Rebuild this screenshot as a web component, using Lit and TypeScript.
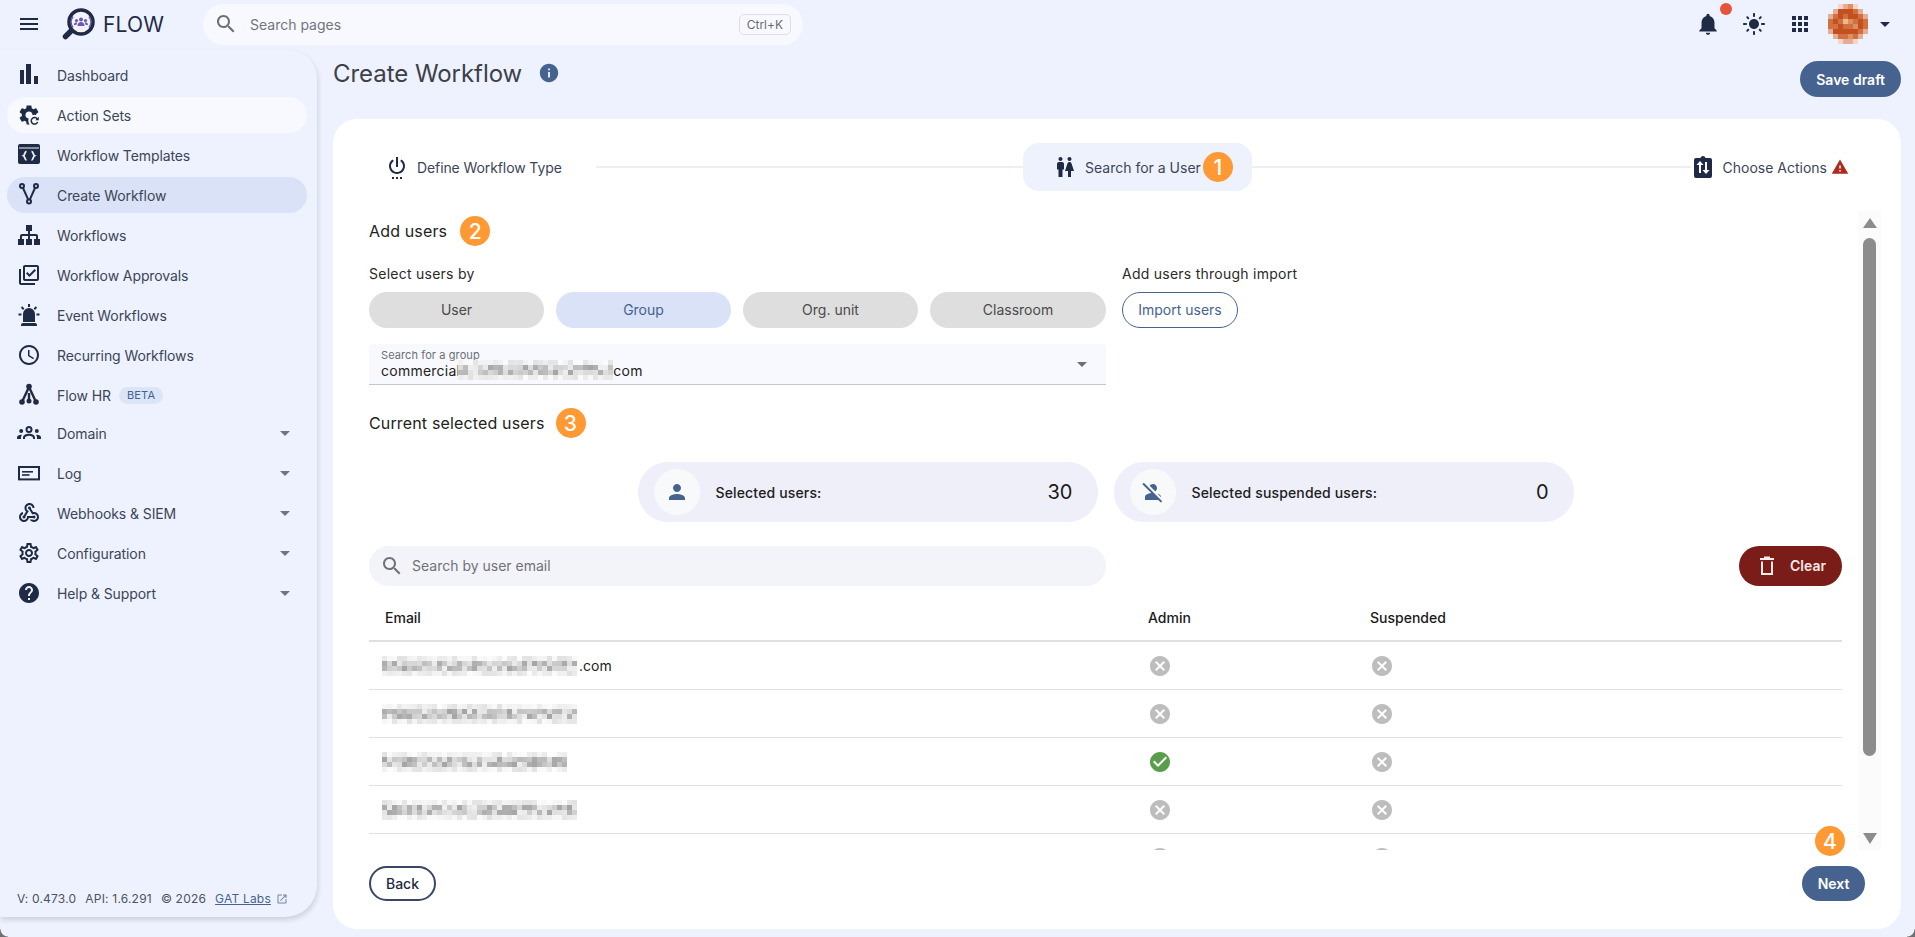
import { LitElement, html, css, svg } from "lit";
import { customElement } from "lit/decorators.js";

const P = {
  menu: "M3 18h18v-2H3v2zm0-5h18v-2H3v2zm0-7v2h18V6H3z",
  search: "M15.5 14h-.79l-.28-.27C15.41 12.59 16 11.11 16 9.5 16 5.91 13.09 3 9.5 3S3 5.91 3 9.5 5.91 16 9.5 16c1.61 0 3.09-.59 4.23-1.57l.27.28v.79l5 4.99L20.49 19l-4.99-5zm-6 0C7.01 14 5 11.99 5 9.5S7.01 5 9.5 5 14 7.01 14 9.5 11.99 14 9.5 14z",
  bell: "M12 22c1.1 0 2-.9 2-2h-4c0 1.1.89 2 2 2zm6-6v-5c0-3.07-1.64-5.64-4.5-6.32V4c0-.83-.67-1.5-1.5-1.5s-1.5.67-1.5 1.5v.68C7.63 5.36 6 7.92 6 11v5l-2 2v1h16v-1l-2-2z",
  sun: "M12 7c-2.76 0-5 2.24-5 5s2.24 5 5 5 5-2.24 5-5-2.24-5-5-5zM2 13h2c.55 0 1-.45 1-1s-.45-1-1-1H2c-.55 0-1 .45-1 1s.45 1 1 1zm18 0h2c.55 0 1-.45 1-1s-.45-1-1-1h-2c-.55 0-1 .45-1 1s.45 1 1 1zM11 2v2c0 .55.45 1 1 1s1-.45 1-1V2c0-.55-.45-1-1-1s-1 .45-1 1zm0 18v2c0 .55.45 1 1 1s1-.45 1-1v-2c0-.55-.45-1-1-1s-1 .45-1 1zM5.99 4.58c-.39-.39-1.03-.39-1.41 0-.39.39-.39 1.03 0 1.41l1.06 1.06c.39.39 1.03.39 1.41 0s.39-1.03 0-1.41L5.99 4.58zm12.37 12.37c-.39-.39-1.03-.39-1.41 0-.39.39-.39 1.03 0 1.41l1.06 1.06c.39.39 1.03.39 1.41 0 .39-.39.39-1.03 0-1.41l-1.06-1.06zm1.06-10.96c.39-.39.39-1.03 0-1.41-.39-.39-1.03-.39-1.41 0l-1.06 1.06c-.39.39-.39 1.03 0 1.41s1.03.39 1.41 0l1.06-1.06zM7.05 18.36c.39-.39.39-1.03 0-1.41-.39-.39-1.03-.39-1.41 0l-1.06 1.06c-.39.39-.39 1.03 0 1.41s1.03.39 1.41 0l1.06-1.06z",
  apps: "M4 8h4V4H4v4zm6 12h4v-4h-4v4zm-6 0h4v-4H4v4zm0-6h4v-4H4v4zm6 0h4v-4h-4v4zm6-10v4h4V4h-4zm-6 4h4V4h-4v4zm6 6h4v-4h-4v4zm0 6h4v-4h-4v4z",
  drop: "M7 10l5 5 5-5z",
  info: "M12 2C6.48 2 2 6.48 2 12s4.48 10 10 10 10-4.48 10-10S17.52 2 12 2zm1 15h-2v-6h2v6zm0-8h-2V7h2v2z",
  power: "M7 24h2v-2H7v2zm4 0h2v-2h-2v2zm2-22h-2v10h2V2zm3.56 2.44l-1.45 1.45C16.84 6.94 18 8.83 18 11c0 3.31-2.69 6-6 6s-6-2.69-6-6c0-2.17 1.16-4.06 2.88-5.12L7.44 4.44C5.36 5.88 4 8.28 4 11c0 4.42 3.58 8 8 8s8-3.58 8-8c0-2.72-1.36-5.12-3.44-6.56zM15 24h2v-2h-2v2z",
  wc: "M5.5 22v-7.5H4V9c0-1.1.9-2 2-2h3c1.1 0 2 .9 2 2v5.5H9.5V22h-4zM18 22v-6h3l-2.54-7.63C18.18 7.55 17.42 7 16.56 7h-.12c-.86 0-1.63.55-1.9 1.37L12 16h3v6h3zM7.5 6c1.11 0 2-.89 2-2s-.89-2-2-2-2 .89-2 2 .89 2 2 2zm9 0c1.11 0 2-.89 2-2s-.89-2-2-2-2 .89-2 2 .89 2 2 2z",
  warn: "M1 21h22L12 2 1 21zm12-3h-2v-2h2v2zm0-4h-2v-4h2v4z",
  person: "M12 12c2.21 0 4-1.79 4-4s-1.79-4-4-4-4 1.79-4 4 1.79 4 4 4zm0 2c-2.67 0-8 1.34-8 4v2h16v-2c0-2.66-5.33-4-8-4z",
  personOff: "M8.65 5.82C9.36 4.72 10.6 4 12 4c2.21 0 4 1.79 4 4 0 1.4-.72 2.64-1.82 3.35L8.65 5.82zM20 17.17c-.02-1.1-.63-2.11-1.61-2.62-.54-.28-1.13-.54-1.77-.76L20 17.17zm1.19 4.02L2.81 2.81 1.39 4.22l8.89 8.89c-1.81.23-3.39.79-4.67 1.45C4.61 15.07 4 16.1 4 17.22V20h13.17l2.61 2.61 1.41-1.42z",
  trash: "M5 4h14v2H5zM9 2.500h6V4H9zM6 7.500V21h12V7.500h-2V19H8V7.500z",
  cancel: "M12 2C6.47 2 2 6.47 2 12s4.47 10 10 10 10-4.47 10-10S17.53 2 12 2zm5 13.59L15.59 17 12 13.41 8.41 17 7 15.59 10.59 12 7 8.41 8.41 7 12 10.59 15.59 7 17 8.41 13.41 12 17 15.59z",
  check: "M12 2C6.48 2 2 6.48 2 12s4.48 10 10 10 10-4.48 10-10S17.52 2 12 2zm-2 15l-5-5 1.41-1.41L10 14.17l7.59-7.59L19 8l-9 9z",
  open: "M19 19H5V5h7V3H5c-1.11 0-2 .9-2 2v14c0 1.1.89 2 2 2h14c1.1 0 2-.9 2-2v-7h-2v7zM14 3v2h3.59l-9.83 9.83 1.41 1.41L19 6.41V10h2V3h-7z",
  gear: "M19.14 12.94c.04-.3.06-.61.06-.94 0-.32-.02-.64-.07-.94l2.03-1.58c.18-.14.23-.41.12-.61l-1.92-3.32c-.12-.22-.37-.29-.59-.22l-2.39.96c-.5-.38-1.03-.7-1.62-.94l-.36-2.54c-.04-.24-.24-.41-.48-.41h-3.84c-.24 0-.43.17-.47.41l-.36 2.54c-.59.24-1.13.57-1.62.94l-2.39-.96c-.22-.08-.47 0-.59.22L2.74 8.87c-.12.21-.08.47.12.61l2.03 1.58c-.05.3-.09.63-.09.94s.02.64.07.94l-2.03 1.58c-.18.14-.23.41-.12.61l1.92 3.32c.12.22.37.29.59.22l2.39-.96c.5.38 1.03.7 1.62.94l.36 2.54c.05.24.24.41.48.41h3.84c.24 0 .44-.17.47-.41l.36-2.54c.59-.24 1.13-.56 1.62-.94l2.39.96c.22.08.47 0 .59-.22l1.92-3.32c.12-.22.07-.47-.12-.61l-2.01-1.58zM12 15.6c-1.98 0-3.6-1.62-3.6-3.6s1.62-3.6 3.6-3.6 3.6 1.62 3.6 3.6-1.62 3.6-3.6 3.6z",
  sitemap: "M9 2v6h2v3H5c-1.1 0-2 .9-2 2v3H1v6h6v-6H5v-3h6v3H9v6h6v-6h-2v-3h6v3h-2v6h6v-6h-2v-3c0-1.1-.9-2-2-2h-6V8h2V2H9z",
  approvals: "M20 4v12H8V4h12m0-2H8c-1.1 0-2 .9-2 2v12c0 1.1.9 2 2 2h12c1.1 0 2-.9 2-2V4c0-1.1-.9-2-2-2zm-7.53 12L9 10.5l1.4-1.41 2.07 2.08L17.6 6 19 7.41 12.47 14zM4 6H2v14c0 1.1.9 2 2 2h14v-2H4V6z",
  alarm: "M6 6.9L3.87 4.78l1.41-1.41L7.4 5.5 6 6.9M13 1v3h-2V1h2m7.13 3.78L18 6.9l-1.4-1.4 2.12-2.13 1.41 1.41M4.5 10.5v2h-3v-2h3m15 0h3v2h-3v-2M6 20h12a2 2 0 0 1 2 2v1H4v-1a2 2 0 0 1 2-2m6-15a6 6 0 0 1 6 6v8H6v-8a6 6 0 0 1 6-6Z",
  clock: "M11.99 2C6.47 2 2 6.48 2 12s4.47 10 9.99 10C17.52 22 22 17.52 22 12S17.52 2 11.99 2zM12 20c-4.42 0-8-3.58-8-8s3.58-8 8-8 8 3.58 8 8-3.58 8-8 8zm.5-13H11v6l5.25 3.15.75-1.23-4.5-2.67z",
  webhook: "M10 15h5.88c.27-.31.67-.5 1.12-.5.83 0 1.5.67 1.5 1.5s-.67 1.5-1.5 1.5c-.44 0-.84-.19-1.12-.5H11.9c-.46 2.28-2.48 4-4.9 4-2.76 0-5-2.24-5-5 0-2.42 1.72-4.44 4-4.9v2.07c-1.16.41-2 1.53-2 2.83 0 1.65 1.35 3 3 3s3-1.35 3-3v-1zm2.5-11c1.65 0 3 1.35 3 3h2c0-2.76-2.24-5-5-5s-5 2.24-5 5c0 1.43.6 2.71 1.55 3.62l-2.35 3.9c-.68.14-1.2.75-1.2 1.48 0 .83.67 1.5 1.5 1.5s1.5-.67 1.5-1.5c0-.16-.02-.31-.07-.45l3.38-5.63C10.49 9.61 9.5 8.42 9.5 7c0-1.65 1.35-3 3-3zm4.5 9c-.64 0-1.23.2-1.72.54l-3.05-5.07C11.53 8.35 11 7.74 11 7c0-.83.67-1.5 1.5-1.5s1.5.67 1.5 1.5c0 .15-.02.29-.06.43l2.19 3.65c.28-.05.57-.08.87-.08 2.76 0 5 2.24 5 5s-2.24 5-5 5c-1.85 0-3.47-1.01-4.33-2.5h2.67c.48.32 1.05.5 1.66.5 1.65 0 3-1.35 3-3s-1.35-3-3-3z",
  settings: "M19.43 12.98c.04-.32.07-.64.07-.98 0-.34-.03-.66-.07-.98l2.11-1.65c.19-.15.24-.42.12-.64l-2-3.46c-.09-.16-.26-.25-.44-.25-.06 0-.12.01-.17.03l-2.49 1c-.52-.4-1.08-.73-1.69-.98l-.38-2.65C14.46 2.18 14.25 2 14 2h-4c-.25 0-.46.18-.49.42l-.38 2.65c-.61.25-1.17.59-1.69.98l-2.49-1c-.06-.02-.12-.03-.18-.03-.17 0-.34.09-.43.25l-2 3.46c-.13.22-.07.49.12.64l2.11 1.65c-.04.32-.07.65-.07.98 0 .33.03.66.07.98l-2.11 1.65c-.19.15-.24.42-.12.64l2 3.46c.09.16.26.25.44.25.06 0 .12-.01.17-.03l2.49-1c.52.4 1.08.73 1.69.98l.38 2.65c.03.24.24.42.49.42h4c.25 0 .46-.18.49-.42l.38-2.65c.61-.25 1.17-.59 1.69-.98l2.49 1c.06.02.12.03.18.03.17 0 .34-.09.43-.25l2-3.46c.12-.22.07-.49-.12-.64l-2.11-1.65zm-1.98-1.71c.04.31.05.52.05.73 0 .21-.02.43-.05.73l-.14 1.13.89.7 1.08.84-.7 1.21-1.27-.51-1.04-.42-.9.68c-.43.32-.84.56-1.25.73l-1.06.43-.16 1.13-.2 1.35h-1.4l-.19-1.35-.16-1.13-1.06-.43c-.43-.18-.83-.41-1.23-.71l-.91-.7-1.06.43-1.27.51-.7-1.21 1.08-.84.89-.7-.14-1.13c-.03-.31-.05-.54-.05-.74s.02-.43.05-.73l.14-1.13-.89-.7-1.08-.84.7-1.21 1.27.51 1.04.42.9-.68c.43-.32.84-.56 1.25-.73l1.06-.43.16-1.13.2-1.35h1.39l.19 1.35.16 1.13 1.06.43c.43.18.83.41 1.23.71l.91.7 1.06-.43 1.27-.51.7 1.21-1.07.85-.89.7.14 1.13zM12 8c-2.21 0-4 1.79-4 4s1.79 4 4 4 4-1.79 4-4-1.79-4-4-4zm0 6c-1.1 0-2-.9-2-2s.9-2 2-2 2 .9 2 2-.9 2-2 2z",
  help: "M12 2C6.48 2 2 6.48 2 12s4.48 10 10 10 10-4.48 10-10S17.52 2 12 2zm1 17h-2v-2h2v2zm2.07-7.75l-.9.92C13.45 12.9 13 13.5 13 15h-2v-.5c0-1.1.45-2.1 1.17-2.83l1.24-1.26c.37-.36.59-.86.59-1.41 0-1.1-.9-2-2-2s-2 .9-2 2H8c0-2.21 1.79-4 4-4s4 1.79 4 4c0 .88-.36 1.68-.93 2.25z",
};

const ic = (d: string, size = 24) =>
  html`<svg class="ic" viewBox="0 0 24 24" width=${size} height=${size}><path d=${d}></path></svg>`;

const custom = (body: unknown) =>
  html`<svg class="ic" viewBox="0 0 24 24" width="24" height="24">${body}</svg>`;

const navIcons: Record<string, unknown> = {
  bars: custom(svg`<rect x="3" y="7" width="4" height="14"/><rect x="9" y="1" width="5" height="20"/><rect x="17" y="13" width="4" height="8"/>`),
  cogsync: custom(svg`<path d=${P.gear}/><circle cx="17.500" cy="18" r="6.200" fill="#f8f9ff"/><path d="M20.300 16a3.300 3.300 0 1 0 .3 3" fill="none" stroke="currentColor" stroke-width="1.500"/><path d="M21.800 13.800v3.400h-3.400z"/>`),
  tmpl: custom(svg`<rect x="1" y="1" width="22" height="20" rx="2"/><rect x="2" y="4.500" width="20" height="1" fill="#eef2fe"/><path d="M9.500 8.500c-2 0-1.400 3.500-3 4.200 1.600.7 1 4.300 3 4.300M14.500 8.500c2 0 1.400 3.500 3 4.200-1.600.7-1 4.300-3 4.300" fill="none" stroke="#eef2fe" stroke-width="1.800"/>`),
  fork: custom(svg`<g fill="none" stroke="currentColor" stroke-width="2" transform="translate(0 -1.500)"><circle cx="5" cy="4.500" r="2"/><circle cx="19" cy="4.500" r="2"/><circle cx="12" cy="20" r="2"/><path d="M6 6.500l5.200 11.700M18 6.500l-5.200 11.700"/></g>`),
  sitemap: ic(P.sitemap),
  approvals: ic(P.approvals),
  alarm: ic(P.alarm),
  clock: ic(P.clock),
  hr: custom(svg`<circle cx="12" cy="3.500" r="2.800"/><circle cx="5" cy="19" r="2.800"/><circle cx="12" cy="18" r="2.500"/><circle cx="19" cy="19" r="2.800"/><path d="M12 4L5 19M12 4L19 19M12 10v8" fill="none" stroke="currentColor" stroke-width="2.400"/>`),
  groups: custom(svg`<circle cx="12" cy="8.500" r="2.500" fill="none" stroke="currentColor" stroke-width="2"/><path d="M6 18v-1.500c0-2.500 3-3.800 6-3.800s6 1.300 6 3.800V18h-2v-1.300c0-1-1.800-2-4-2s-4 1-4 2V18z"/><circle cx="4.200" cy="10" r="2"/><circle cx="19.800" cy="10" r="2"/><path d="M0 18v-1.500c0-1.800 2-2.800 4-2.800.4 0 .7 0 1 .1-.6.7-1 1.600-1 2.700V18zM24 18v-1.500c0-1.800-2-2.800-4-2.800-.4 0-.7 0-1 .1.600.7 1 1.600 1 2.700V18z"/>`),
  log: custom(svg`<rect x="2" y="6" width="20" height="12.400" fill="none" stroke="currentColor" stroke-width="2"/><rect x="5" y="10" width="11" height="1.600"/><rect x="5" y="13.200" width="7.500" height="1.600"/>`),
  webhook: ic(P.webhook),
  settings: ic(P.settings),
  help: ic(P.help),
};

type NavItem = { label: string; icon: string; cls?: string; beta?: boolean; more?: boolean };

const NAV: NavItem[] = [
  { label: "Dashboard", icon: "bars" },
  { label: "Action Sets", icon: "cogsync", cls: "hover" },
  { label: "Workflow Templates", icon: "tmpl" },
  { label: "Create Workflow", icon: "fork", cls: "active" },
  { label: "Workflows", icon: "sitemap" },
  { label: "Workflow Approvals", icon: "approvals" },
  { label: "Event Workflows", icon: "alarm" },
  { label: "Recurring Workflows", icon: "clock" },
  { label: "Flow HR", icon: "hr", beta: true, cls: "tight" },
  { label: "Domain", icon: "groups", more: true },
  { label: "Log", icon: "log", more: true },
  { label: "Webhooks & SIEM", icon: "webhook", more: true },
  { label: "Configuration", icon: "settings", more: true },
  { label: "Help & Support", icon: "help", more: true },
];

function pixels(cols: number, seed: number, rows = 4, cell = 5) {
  let s = seed;
  const next = () => {
    s = (s * 16807) % 2147483647;
    return (s % 1000) / 1000;
  };
  const rects: unknown[] = [];
  for (let r = 0; r < rows; r++) {
    for (let c = 0; c < cols; c++) {
      const mid = r === 1 || r === 2;
      const v = mid ? 165 + Math.floor(next() * 75) : 225 + Math.floor(next() * 28);
      rects.push(svg`<rect x=${c * cell} y=${r * cell} width=${cell} height=${cell} fill=${`rgb(${v},${v},${v})`}/>`);
    }
  }
  return html`<svg class="px" width=${cols * cell} height=${rows * cell} viewBox="0 0 ${cols * cell} ${rows * cell}">${rects}</svg>`;
}

const AV = [
  "..plkp..",
  ".ldddml.",
  "lmdmddml",
  "mdmskmdm",
  "mmdmmkdm",
  "ldddddml",
  ".lmmkml.",
  "..pllp..",
];
const AVC: Record<string, string> = { d: "#c44f1f", m: "#d0713f", k: "#dc8f63", l: "#e5ad95", p: "#f2d6cb", s: "#ecb98c" };

function avatar() {
  const cell = 40 / 8;
  const rects: unknown[] = [];
  AV.forEach((row, y) =>
    [...row].forEach((ch, x) => {
      if (ch !== ".") rects.push(svg`<rect x=${x * cell} y=${y * cell} width=${cell} height=${cell} fill=${AVC[ch]}/>`);
    })
  );
  return html`<svg class="avatar" width="40" height="40" viewBox="0 0 40 40" shape-rendering="crispEdges">${rects}</svg>`;
}

const badge = (n: number) => html`<span class="badge">${n}</span>`;

const ROWS = [
  { cols: 39, seed: 71, admin: false, com: true },
  { cols: 39, seed: 913, admin: false },
  { cols: 37, seed: 2207, admin: true },
  { cols: 39, seed: 4409, admin: false },
  { cols: 0, seed: 1, admin: false },
];

@customElement("app-root")
export class AppRoot extends LitElement {
  static styles = css`
    :host {
      display: block;
      width: 100%;
      height: 100vh;
      overflow: hidden;
      position: relative;
      background: #eef2fe;
      color: #3b4559;
      font-family: Inter, "Noto Sans", sans-serif;
      font-size: 14px;
    }
    * { box-sizing: border-box; }
    .ic { fill: currentColor; display: block; flex: none; }
    .px { display: block; flex: none; }

    .top { height: 50px; display: flex; align-items: center; padding: 0 25px 2px 17px; color: #1f2a44; }
    .logo { margin-left: 20px; flex: none; display: block; }
    .brand { margin-left: 8px; width: 100px; font-size: 21px; color: #1f2a44; letter-spacing: .2px; }
    .search {
      width: 600px; height: 41px; border-radius: 21px; background: #f8f9ff;
      display: flex; align-items: center; padding: 0 12px 0 11px; gap: 12px; color: #6b6f76;
    }
    .search span { flex: 1; color: #70757e; }
    .search kbd {
      font: 12px Inter, sans-serif; color: #666c76; border: 1px solid #dcdfe6; border-radius: 5px; padding: 2px 7px;
    }
    .tools { margin-left: auto; display: flex; align-items: center; }
    .bell { position: relative; }
    .dot { position: absolute; top: -8px; right: -11px; width: 12px; height: 12px; border-radius: 50%; background: #e5533d; }
    .sun { margin-left: 21px; }
    .apps { margin-left: 22px; }
    .avatar { margin-left: 16px; display: block; flex: none; }
    .caret { margin-left: 5px; margin-right: -7px; }

    .layout { display: flex; height: 887px; }
    .side {
      width: 317px; height: 867px; flex: none; display: flex; flex-direction: column;
      padding: 5px 10px 0 7px; border-radius: 0 28px 32px 0; background: #eef2fe;
      box-shadow: 1px 3px 5px rgba(30, 40, 70, .16);
    }
    .item { height: 36px; margin: 2px 0; display: flex; align-items: center; padding: 0 10px; gap: 16px; border-radius: 18px; flex: none; color: #3b4559; letter-spacing: -.1px; }
    .item > .ic { color: #1f2a44; }
    .item.hover { background: #f8f9ff; }
    .item.active { background: #d9e2f6; }
    .item.tight { margin-bottom: 0; }
    .item .arrow { margin-left: auto; color: #70747f; }
    .beta { margin-left: -8px; background: #dce5f8; color: #46638f; font-size: 11px; padding: 0 8px; line-height: 17px; border-radius: 9px; letter-spacing: .2px; }
    .foot { margin-top: auto; padding: 0 0 11px 10px; font-size: 12px; color: #4a5262; display: flex; align-items: center; letter-spacing: .2px; white-space: nowrap; }
    .foot span { margin-right: 9px; }
    .foot a { color: #46638f; text-decoration: underline; margin-right: 5px; }
    .foot .ic { color: #6f86a8; }

    .main { flex: 1; min-width: 0; padding: 0 14px 8px 16px; display: flex; flex-direction: column; }
    .head { height: 69px; flex: none; display: flex; align-items: flex-start; justify-content: space-between; }
    .title { height: 46px; display: flex; align-items: center; gap: 16px; font-size: 24px; color: #3c4048; letter-spacing: -.05px; }
    .title .ic { color: #46638f; }
    .save { margin-top: 11px; }
    .btn { border: 0; height: 36px; border-radius: 18px; background: #46638f; color: #fff; font: 600 14px Inter, sans-serif; padding: 0 16px; display: flex; align-items: center; }

    .card { flex: 1; min-height: 0; background: #fff; border-radius: 24px; padding-top: 24px; display: flex; flex-direction: column; position: relative; }
    .stepper { height: 48px; flex: none; margin: 0 36px; display: flex; align-items: center; color: #1f2a44; }
    .step { display: flex; align-items: center; gap: 8px; height: 48px; color: #3b4559; flex: none; white-space: nowrap; }
    .step > .ic { color: #1f2a44; }
    .step.a { padding: 0 16px; letter-spacing: -.1px; width: 209px; }
    .step.b { background: #eef2fd; border-radius: 16px; width: 229px; padding: 0 20px 0 30px; }
    .step.b .badge { margin-left: -6px; }
    .step.c { padding-right: 16px; }
    .step.c .warn { color: #ad2a20; margin-left: -4px; }
    .line { height: 2px; background: #efefef; margin-top: -1px; }
    .line.l1 { width: 427px; margin-left: 18px; }
    .line.l2 { flex: 1; }

    .badge { width: 30px; height: 30px; border-radius: 50%; flex: none; background: #ff9933; color: #fff; font-size: 21px; font-weight: 500; display: flex; align-items: center; justify-content: center; }

    .body { margin-top: 20px; height: 639px; flex: none; display: flex; gap: 16px; padding: 0 20px 0 36px; }
    .scroll { flex: 1; min-width: 0; overflow: hidden; padding-top: 5px; color: #1a1a1a; }
    .h { display: flex; align-items: center; gap: 13px; height: 30px; font-size: 16px; color: #222; letter-spacing: .15px; }
    .sel { display: flex; margin-top: 18px; }
    .sel .g { width: 753px; }
    .lbl { height: 20px; line-height: 20px; color: #2a2a2a; letter-spacing: .25px; }
    .pills { display: flex; gap: 12px; margin-top: 8px; }
    .pill { width: 175px; height: 36px; border-radius: 18px; background: #dedede; color: #4a4a4a; display: flex; align-items: center; justify-content: center; padding-bottom: 1px; }
    .pill:last-child { width: 176px; }
    .pill.on { background: #d9e2f6; color: #46638f; }
    .import { width: 116px; margin-top: 8px; height: 36px; border-radius: 18px; border: 1px solid #46638f; color: #46638f; display: flex; align-items: center; justify-content: center; padding-bottom: 1px; }
    .field { width: 737px; height: 41px; margin-top: 16px; background: #f8f9fe; border-bottom: 1px solid #c4c7d0; border-radius: 4px 4px 0 0; padding: 5px 12px 0; position: relative; }
    .field small { display: block; font-size: 11px; line-height: 13px; color: #6a6e75; letter-spacing: .1px; }
    .field .val { display: flex; align-items: center; line-height: 17px; color: #222; margin-top: -2px; height: 20px; letter-spacing: .25px; }
    .field .val .px { margin-left: -2px; }
    .field .arrow { position: absolute; right: 12px; top: 8px; color: #6b6f76; }
    .cur { margin-top: 23px; gap: 11px; }
    .stats { display: flex; justify-content: center; gap: 16px; margin-top: 24px; }
    .stat { width: 460px; height: 60px; border-radius: 30px; background: #eeeff9; display: flex; align-items: center; padding: 0 25px 0 16px; gap: 16px; }
    .stat i { width: 46px; height: 46px; border-radius: 50%; background: #f8f9fa; color: #46638f; display: flex; align-items: center; justify-content: center; }
    .stat b { font-weight: 500; flex: 1; color: #202020; letter-spacing: .15px; }
    .stat em { font-style: normal; font-size: 20px; color: #1a1a1a; }
    .tools2 { display: flex; justify-content: space-between; margin-top: 24px; }
    .find { width: 737px; height: 40px; border-radius: 20px; background: #f3f4fa; display: flex; align-items: center; padding: 0 0 1px 11px; gap: 8px; color: #6f7278; }
    .clear { background: #7a1c18; border: 0; width: 103px; height: 40px; border-radius: 20px; color: #f6e9e8; font: 600 14px Inter, sans-serif; display: flex; align-items: center; padding: 0 0 1px 16px; gap: 11px; }
    .thead, .row { display: grid; grid-template-columns: 779px 222px 1fr; align-items: center; }
    .thead { height: 46px; margin-top: 10px; border-bottom: 2px solid #e0e0e0; font-weight: 500; color: #1a1a1a; padding-bottom: 1px; }
    .row { height: 48px; border-bottom: 1px solid #e0e0e0; color: #222; }
    .row:last-child { border-bottom: 0; }
    .mail { padding-left: 16px; display: flex; align-items: center; }
    .row .mail { padding-left: 13px; }
    .row .px { margin-right: 2px; }
    .no { color: #bdbdbd; }
    .yes { color: #5a9e4b; }

    .bar { width: 23px; flex: none; background: #fbfbfb; display: flex; flex-direction: column; align-items: center; position: relative; }
    .up, .down { width: 0; height: 0; border-left: 7.500px solid transparent; border-right: 7.500px solid transparent; flex: none; }
    .up { margin-top: 7px; border-bottom: 10px solid #8c8c8c; }
    .thumb { width: 13px; height: 518px; margin-top: 10px; border-radius: 7px; background: #8c8c8c; flex: none; }
    .down { margin-top: 77px; border-top: 11px solid #8c8c8c; }

    .foot2 { flex: none; margin: 16px 36px 0; display: flex; justify-content: space-between; }
    .back { width: 67px; height: 35px; border-radius: 18px; background: #fff; border: 2px solid #3a4764; color: #1f2a44; font: 500 14px Inter, sans-serif; }
    .next { height: 35px; width: 63px; padding: 0; justify-content: center; font-size: 14px; }
    .b4 { position: absolute; right: 56px; bottom: 73px; }
    .corner { position: absolute; bottom: 0; width: 8px; height: 8px; }
    .corner.r { right: 0; background: radial-gradient(circle at top left, transparent 7px, #6f6f6f 8px); }
    .corner.l { left: 0; background: radial-gradient(circle at top right, transparent 7px, #6f6f6f 8px); }
  `;

  render() {
    return html`
      <div class="top">
        ${ic(P.menu)}
        <svg class="logo" width="34" height="34" viewBox="0 0 34 34">
          <path d="M10 24L4.500 29.500" stroke="#1f2a44" stroke-width="5.500" stroke-linecap="round" fill="none"></path>
          <circle cx="20" cy="15" r="12" fill="#f4f3fb" stroke="#1f2a44" stroke-width="3.500"></circle>
          <g fill="#6a5bb0">
            <circle cx="20" cy="12.500" r="2"></circle>
            <circle cx="15.500" cy="13.500" r="1.600"></circle>
            <circle cx="24.500" cy="13.500" r="1.600"></circle>
            <path d="M16.500 19c0-2.500 1.500-4 3.500-4s3.500 1.500 3.500 4z"></path>
            <path d="M13 18c0-1.800 1-2.800 2.500-2.800l.8.200-1 2.600zM27 18c0-1.800-1-2.800-2.500-2.800l-.8.200 1 2.600z"></path>
          </g>
          <path d="M12 9.500a9.500 9.500 0 0 0 0 11M28 9.500a9.500 9.500 0 0 1 0 11" stroke="#6a5bb0" stroke-width="1.500" fill="none"></path>
        </svg>
        <div class="brand">FLOW</div>
        <div class="search">${ic(P.search)}<span>Search pages</span><kbd>Ctrl+K</kbd></div>
        <div class="tools">
          <div class="bell">${ic(P.bell, 26)}<div class="dot"></div></div>
          <div class="sun">${ic(P.sun)}</div>
          <div class="apps">${ic(P.apps)}</div>
          ${avatar()}
          <div class="caret">${ic(P.drop)}</div>
        </div>
      </div>
      <div class="layout">
        <nav class="side">
          ${NAV.map(
            (n) => html`<div class="item ${n.cls ?? ""}">
              ${navIcons[n.icon]}<span>${n.label}</span>
              ${n.beta ? html`<span class="beta">BETA</span>` : ""}
              ${n.more ? html`<span class="arrow">${ic(P.drop)}</span>` : ""}
            </div>`
          )}
          <div class="foot">
            <span>V: 0.473.0</span><span>API: 1.6.291</span><span>© 2026</span>
            <a>GAT Labs</a>${ic(P.open, 12)}
          </div>
        </nav>
        <main class="main">
          <div class="head">
            <div class="title">Create Workflow ${ic(P.info, 22)}</div>
            <button class="btn save">Save draft</button>
          </div>
          <section class="card">
            <div class="stepper">
              <div class="step a">${ic(P.power)}<span>Define Workflow Type</span></div>
              <div class="line l1"></div>
              <div class="step b">${ic(P.wc)}<span>Search for a User</span>${badge(1)}</div>
              <div class="line l2"></div>
              <div class="step c">
                <svg class="ic" viewBox="0 0 24 24" width="24" height="24">
                  <path d="M5 3h4.500c.3-1.200 1.300-2 2.500-2s2.200.8 2.500 2H19a2 2 0 0 1 2 2v16a2 2 0 0 1-2 2H5a2 2 0 0 1-2-2V5a2 2 0 0 1 2-2z"></path>
                  <path d="M9 6l3.500 4H10v8H8v-8H5.500zM15 19l-3.500-4H14V7h2v8h2.500z" fill="#fff"></path>
                </svg>
                <span>Choose Actions</span>
                <span class="warn">${ic(P.warn, 18)}</span>
              </div>
            </div>
            <div class="body">
              <div class="scroll">
                <div class="h">Add users ${badge(2)}</div>
                <div class="sel">
                  <div class="g">
                    <div class="lbl">Select users by</div>
                    <div class="pills">
                      <div class="pill">User</div>
                      <div class="pill on">Group</div>
                      <div class="pill">Org. unit</div>
                      <div class="pill">Classroom</div>
                    </div>
                  </div>
                  <div>
                    <div class="lbl">Add users through import</div>
                    <div class="import">Import users</div>
                  </div>
                </div>
                <div class="field">
                  <small>Search for a group</small>
                  <div class="val">commercial${pixels(31, 515, 4, 5)}com</div>
                  <span class="arrow">${ic(P.drop)}</span>
                </div>
                <div class="h cur">Current selected users ${badge(3)}</div>
                <div class="stats">
                  <div class="stat"><i>${ic(P.person)}</i><b>Selected users:</b><em>30</em></div>
                  <div class="stat"><i>${ic(P.personOff)}</i><b>Selected suspended users:</b><em>0</em></div>
                </div>
                <div class="tools2">
                  <div class="find">${ic(P.search)}<span>Search by user email</span></div>
                  <button class="clear">${ic(P.trash)}<span>Clear</span></button>
                </div>
                <div class="thead"><div class="mail">Email</div><div>Admin</div><div>Suspended</div></div>
                ${ROWS.map(
                  (r) => html`<div class="row">
                    <div class="mail">${r.cols ? pixels(r.cols, r.seed) : ""}${r.com ? ".com" : ""}</div>
                    <div class=${r.admin ? "yes" : "no"}>${ic(r.admin ? P.check : P.cancel)}</div>
                    <div class="no">${ic(P.cancel)}</div>
                  </div>`
                )}
              </div>
              <div class="bar">
                <div class="up"></div>
                <div class="thumb"></div>
                <div class="down"></div>
              </div>
            </div>
            <div class="foot2">
              <button class="back">Back</button>
              <button class="btn next">Next</button>
            </div>
            <div class="b4">${badge(4)}</div>
          </section>
        </main>
      </div>
      <div class="corner l"></div>
      <div class="corner r"></div>
    `;
  }
}
